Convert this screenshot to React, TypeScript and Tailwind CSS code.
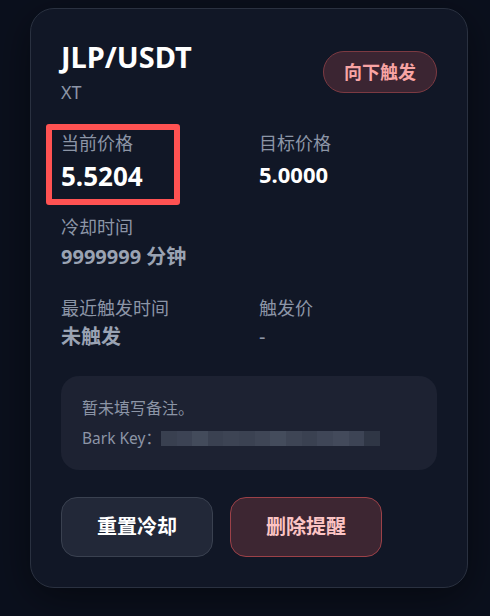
const font = { fontFamily: '"Noto Sans", "Noto Sans CJK SC", sans-serif' };

const mosaic = [
  "#394050", "#3c4354", "#434b5b", "#3a4151", "#3d4454", "#3b4252",
  "#3f4656", "#444c5c", "#3e4555", "#3a4151", "#3f4657", "#434a5b",
  "#3d4455", "#2f3645",
];

function Field({ label, children }: { label: string; children: React.ReactNode }) {
  return (
    <div className="flex flex-col">
      <span className="text-[18px] leading-[28px] text-[#8c95a6]">{label}</span>
      {children}
    </div>
  );
}

export default function App() {
  return (
    <div className="min-h-[616px] bg-[#0b101d] pt-[8px] pl-[30px]" style={font}>
      <div className="relative w-[438px] rounded-[24px] border border-[#2a3140] bg-[#111726] p-[30px] shadow-[0_10px_40px_rgba(0,0,0,0.45)]">
        <div className="flex items-center justify-between">
          <div className="flex flex-col">
            <h1 className="text-[29px] font-bold leading-[35px] text-white">JLP/USDT</h1>
            <span className="mt-[6px] text-[18px] leading-[25px] text-[#8c95a6]">XT</span>
          </div>
          <span className="rounded-full border border-[#7c3a42] bg-[#3b2532] px-[20px] py-[6px] text-[18px] font-bold leading-[28px] text-[#f8a4a4]">
            向下触发
          </span>
        </div>

        <div className="mt-[24px] grid grid-cols-2 gap-x-5 gap-y-[20px]">
          <Field label="当前价格">
            <span className="mt-[2px] text-[26px] font-bold leading-[34px] text-white">5.5204</span>
          </Field>
          <Field label="目标价格">
            <span className="mt-[2px] text-[22px] font-bold leading-[30px] text-white">5.0000</span>
          </Field>
          <Field label="冷却时间">
            <span className="mt-[2px] text-[20px] font-bold leading-[28px] text-[#9aa3b3]">9999999 分钟</span>
          </Field>
          <div />
          <div className="mt-[3px]">
            <Field label="最近触发时间">
              <span className="mt-[1px] text-[20px] font-bold leading-[28px] text-[#9aa3b3]">未触发</span>
            </Field>
          </div>
          <div className="mt-[3px]">
            <Field label="触发价">
              <span className="mt-[1px] text-[20px] leading-[28px] text-[#8c95a6]">-</span>
            </Field>
          </div>
        </div>

        <div className="mt-[25px] rounded-[18px] bg-[#1d2232] px-[21px] pt-[20px] pb-[20px]">
          <p className="text-[16px] leading-[24px] text-[#8c95a6]">暂未填写备注。</p>
          <div className="mt-[6px] flex items-center text-[15.5px] leading-[24px] text-[#8c95a6]">
            <span>Bark Key：</span>
            <div className="flex h-[15px] w-[219px]">
              {mosaic.map((c, i) => (
                <div key={i} className="h-full flex-1" style={{ backgroundColor: c }} />
              ))}
            </div>
          </div>
        </div>

        <div className="mt-[27px] flex gap-[17px]">
          <button className="rounded-[16px] border border-[#3a4150] bg-[#222838] px-[35px] py-[15px] text-[20px] font-bold leading-[28px] text-white">
            重置冷却
          </button>
          <button className="rounded-[16px] border border-[#9c4148] bg-[#3d2632] px-[35px] py-[15px] text-[20px] font-bold leading-[28px] text-[#fcc4c4]">
            删除提醒
          </button>
        </div>

        <div className="pointer-events-none absolute left-[15px] top-[115px] h-[81px] w-[134px] rounded-[3px] border-[6px] border-[#ff5252]" />
      </div>
    </div>
  );
}
